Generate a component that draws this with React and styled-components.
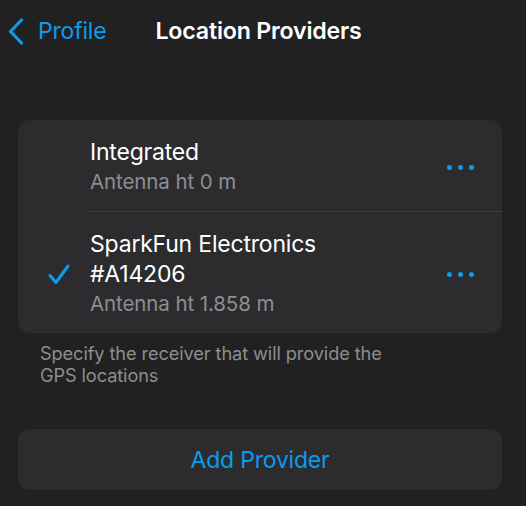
import React from "react";
import styled, { createGlobalStyle } from "styled-components";

const Global = createGlobalStyle`
  html, body { margin: 0; padding: 0; background: #212121; }
  body { font-family: Inter, "Noto Sans", sans-serif; -webkit-font-smoothing: antialiased; }
`;

const Screen = styled.div`
  width: 526px;
  height: 506px;
  background: #212121;
  overflow: hidden;
  box-sizing: border-box;
  padding: 0 24px 0 18px;
  display: flex;
  flex-direction: column;
`;

const NavBar = styled.div`
  height: 62px;
  display: flex;
  align-items: center;
  margin-left: -10px;
`;

const BackButton = styled.div`
  display: flex;
  align-items: center;
  gap: 14px;
  color: #0a9cf0;
  font-size: 23px;
  letter-spacing: -0.2px;
`;

const NavTitle = styled.div`
  margin-left: 49px;
  color: #ffffff;
  font-size: 23.2px;
  font-weight: 600;
  letter-spacing: -0.2px;
`;

const Card = styled.div`
  margin-top: 58px;
  background: #2c2c2e;
  border-radius: 12px;
  overflow: hidden;
`;

const Row = styled.div`
  display: flex;
  align-items: center;
  padding: 17px 28px 14px 0;
`;

const Mark = styled.div`
  width: 72px;
  flex: none;
  display: flex;
  justify-content: flex-start;
  padding-left: 30px;
  box-sizing: border-box;
`;

const Body = styled.div`
  flex: 1;
  display: flex;
  flex-direction: column;
`;

const Title = styled.div`
  color: #ffffff;
  font-size: 23px;
  line-height: 30px;
  letter-spacing: -0.2px;
  max-width: ${(p) => p.$max || "none"};
`;

const Sub = styled.div`
  color: #8d8d93;
  font-size: 20.5px;
  line-height: 30px;
  letter-spacing: -0.1px;
`;

const Divider = styled.div`
  height: 1px;
  background: #3d3d40;
  margin-left: 72px;
`;

const Dots = styled.div`
  display: flex;
  gap: 6px;
  span {
    width: 5px;
    height: 5px;
    border-radius: 50%;
    background: #0a9cf0;
  }
`;

const Footer = styled.div`
  color: #8d8d93;
  font-size: 18.2px;
  line-height: 22px;
  padding: 9px 0 0 22px;
  max-width: 370px;
  letter-spacing: -0.1px;
`;

const AddButton = styled.div`
  margin-top: 43px;
  height: 61px;
  background: #2c2c2e;
  border-radius: 12px;
  display: flex;
  align-items: center;
  justify-content: center;
  color: #0a9cf0;
  font-size: 23px;
  letter-spacing: -0.2px;
`;

const MoreDots = () => (
  <Dots>
    <span />
    <span />
    <span />
  </Dots>
);

const Check = () => (
  <svg width="22" height="21" viewBox="0 0 22 21" fill="none">
    <path d="M2 11.5 L8 18.5 L20 2" stroke="#0a9cf0" strokeWidth="3" strokeLinecap="round" strokeLinejoin="round" />
  </svg>
);

const Chevron = () => (
  <svg width="16" height="27" viewBox="0 0 16 27" fill="none">
    <path d="M13.5 2 L2.5 13.5 L13.5 25" stroke="#0a9cf0" strokeWidth="3.2" strokeLinecap="round" strokeLinejoin="round" />
  </svg>
);

export default function App() {
  return (
    <>
      <Global />
      <Screen>
        <NavBar>
          <BackButton>
            <Chevron />
            Profile
          </BackButton>
          <NavTitle>Location Providers</NavTitle>
        </NavBar>
        <Card>
          <Row>
            <Mark />
            <Body>
              <Title>Integrated</Title>
              <Sub>Antenna ht 0 m</Sub>
            </Body>
            <MoreDots />
          </Row>
          <Divider />
          <Row>
            <Mark>
              <Check />
            </Mark>
            <Body>
              <Title $max="250px">SparkFun Electronics #A14206</Title>
              <Sub>Antenna ht 1.858 m</Sub>
            </Body>
            <MoreDots />
          </Row>
        </Card>
        <Footer>Specify the receiver that will provide the GPS locations</Footer>
        <AddButton>Add Provider</AddButton>
      </Screen>
    </>
  );
}
